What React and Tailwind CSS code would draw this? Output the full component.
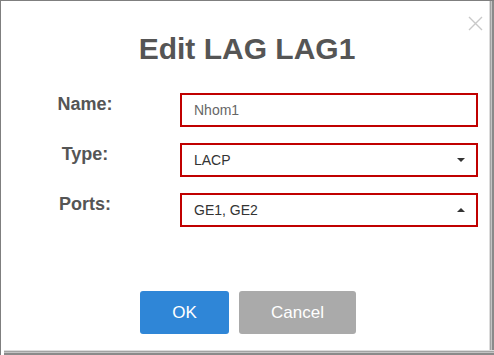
const FIELDS = [
  { label: 'Name:', value: 'Nhom1', caret: null, muted: true },
  { label: 'Type:', value: 'LACP', caret: 'down' },
  { label: 'Ports:', value: 'GE1, GE2', caret: 'up' },
]

function Caret({ dir }) {
  return (
    <svg width="8" height="4" viewBox="0 0 8 4" className="shrink-0">
      {dir === 'down'
        ? <polygon points="0,0 8,0 4,4" fill="#333" />
        : <polygon points="0,4 8,4 4,0" fill="#333" />}
    </svg>
  )
}

export default function App() {
  return (
    <div className="w-[494px] h-[355px] flex flex-col border-t border-l border-[#7f7f7f] bg-white font-['Liberation_Sans',Arial,sans-serif]">
      <div className="flex flex-1">
        <div className="relative flex-1 flex flex-col">
          {/* close */}
          <svg width="15" height="15" viewBox="0 0 15 15" className="absolute left-[467px] top-[15px]">
            <path d="M1 1 L14 14 M14 1 L1 14" stroke="#c9c9c9" strokeWidth="1.4" />
          </svg>

          <h1 className="pt-[33px] pl-[4px] text-center text-[30px] leading-none font-bold text-[#555]">
            Edit LAG LAG1
          </h1>

          <div className="mt-[29px] flex flex-col gap-[16px]">
            {FIELDS.map(f => (
              <div key={f.label} className="flex">
                <div className="w-[168px] pt-[2px] text-center text-[18px] leading-none font-bold text-[#555]">
                  {f.label}
                </div>
                <div className="ml-[11px] w-[298px] h-[34px] border-2 border-[#c00000] flex items-center pl-[12px] pr-[11px]">
                  <span className={`flex-1 text-[14px] ${f.muted ? 'text-[#666]' : 'text-[#333]'}`}>
                    {f.value}
                  </span>
                  {f.caret && <Caret dir={f.caret} />}
                </div>
              </div>
            ))}
          </div>

          <div className="mt-[64px] pl-[6px] flex justify-center gap-[10px]">
            <button className="w-[89px] h-[43px] rounded-[3px] bg-[#2f86d7] text-white text-[17px]">
              OK
            </button>
            <button className="w-[117px] h-[43px] rounded-[3px] bg-[#aaaaaa] text-white text-[17px]">
              Cancel
            </button>
          </div>
        </div>
        <div className="w-[5px] bg-[linear-gradient(to_right,#dcdcdc_0_1px,#a3a3a3_1px_2px,#c4c4c4_2px_3px,#8a8a8a_3px_5px)]" />
      </div>
      <div className="h-[5px] ml-[3px] bg-[linear-gradient(to_bottom,#dcdcdc_0_1px,#a3a3a3_1px_2px,#c4c4c4_2px_3px,#8a8a8a_3px_5px)]" />
    </div>
  )
}
